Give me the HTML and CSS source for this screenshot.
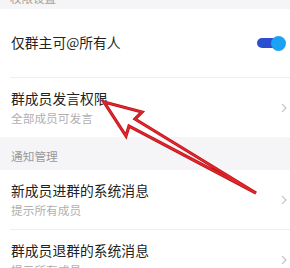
FILE: index.html
```html
<!DOCTYPE html>
<html lang="zh">
<head>
<meta charset="utf-8">
<link rel="stylesheet" href="styles.css">
</head>
<body>
<div class="page">
  <div class="top"><span class="top-label">权限设置</span></div>
  <div class="row row-single">
    <div class="title">仅群主可@所有人</div>
    <div class="toggle"><span class="track"></span><span class="knob"></span></div>
  </div>
  <div class="divider"></div>
  <div class="row row-double">
    <div class="text">
      <div class="title">群成员发言权限</div>
      <div class="sub">全部成员可发言</div>
    </div>
    <svg class="chev" width="6" height="10" viewBox="0 0 6 10"><path d="M1 1 L5 5 L1 9" fill="none" stroke="#c9c9c9" stroke-width="1.3"/></svg>
  </div>
  <div class="section"><span class="section-label">通知管理</span></div>
  <div class="row row-double">
    <div class="text">
      <div class="title">新成员进群的系统消息</div>
      <div class="sub">提示所有成员</div>
    </div>
    <svg class="chev" width="6" height="10" viewBox="0 0 6 10"><path d="M1 1 L5 5 L1 9" fill="none" stroke="#c9c9c9" stroke-width="1.3"/></svg>
  </div>
  <div class="divider"></div>
  <div class="row row-double">
    <div class="text">
      <div class="title">群成员退群的系统消息</div>
      <div class="sub">提示所有成员</div>
    </div>
    <svg class="chev" width="6" height="10" viewBox="0 0 6 10"><path d="M1 1 L5 5 L1 9" fill="none" stroke="#c9c9c9" stroke-width="1.3"/></svg>
  </div>
  <svg class="arrow" width="290" height="268" viewBox="0 0 290 268">
    <polygon points="104,102 142,112 135,119 256,193 129,126 126,136" fill="none" stroke="#b8141a" stroke-width="3.2" stroke-linejoin="miter"/>
    <polygon points="104,102 142,112 135,119 256,193 129,126 126,136" fill="none" stroke="#e3262b" stroke-width="1.6" stroke-linejoin="miter"/>
  </svg>
</div>
</body>
</html>
```

FILE: styles.css
```css
* { box-sizing: border-box; }
html, body { margin: 0; padding: 0; background: #fff; }
body {
  font-family: "Noto Sans CJK SC", "Noto Sans", sans-serif;
  width: 290px;
  height: 268px;
  overflow: hidden;
}
.page { position: relative; width: 290px; height: 268px; overflow: hidden; }
.top {
  height: 9px;
  background: #f5f5f7;
  overflow: hidden;
  padding-left: 10px;
}
.top-label {
  display: block;
  margin-top: -9px;
  font-size: 11.5px;
  line-height: 14px;
  color: #a0a0a0;
}
.row {
  display: flex;
  align-items: center;
  justify-content: space-between;
  padding: 0 3px 0 11px;
  background: #fff;
}
.row-single { height: 68px; padding-right: 4px; }
.row-double { height: 59px; }
.text { display: flex; flex-direction: column; gap: 2px; margin-top: -1px; }
.title {
  font-size: 13.8px;
  line-height: 19px;
  color: #222;
}
.row-single .title { margin-top: -2px; }
.sub {
  font-size: 11.7px;
  line-height: 16px;
  color: #b0b0b0;
}
.chev { flex: none; }
.divider { height: 1px; background: #efefef; margin-left: 10px; }
.section {
  height: 33px;
  background: #f5f5f7;
  padding: 11px 0 0 11px;
}
.section-label {
  display: block;
  font-size: 11.7px;
  line-height: 16px;
  color: #9a9a9a;
}
.toggle {
  position: relative;
  width: 29px;
  height: 15px;
  flex: none;
}
.track {
  position: absolute;
  left: 0;
  top: 2.5px;
  width: 24px;
  height: 10px;
  border-radius: 5px;
  background: #2b4fcf;
}
.knob {
  position: absolute;
  right: 0;
  top: 0;
  width: 15px;
  height: 15px;
  border-radius: 50%;
  background: #1ca2f4;
}
.arrow { position: absolute; left: 0; top: 0; pointer-events: none; }
```
